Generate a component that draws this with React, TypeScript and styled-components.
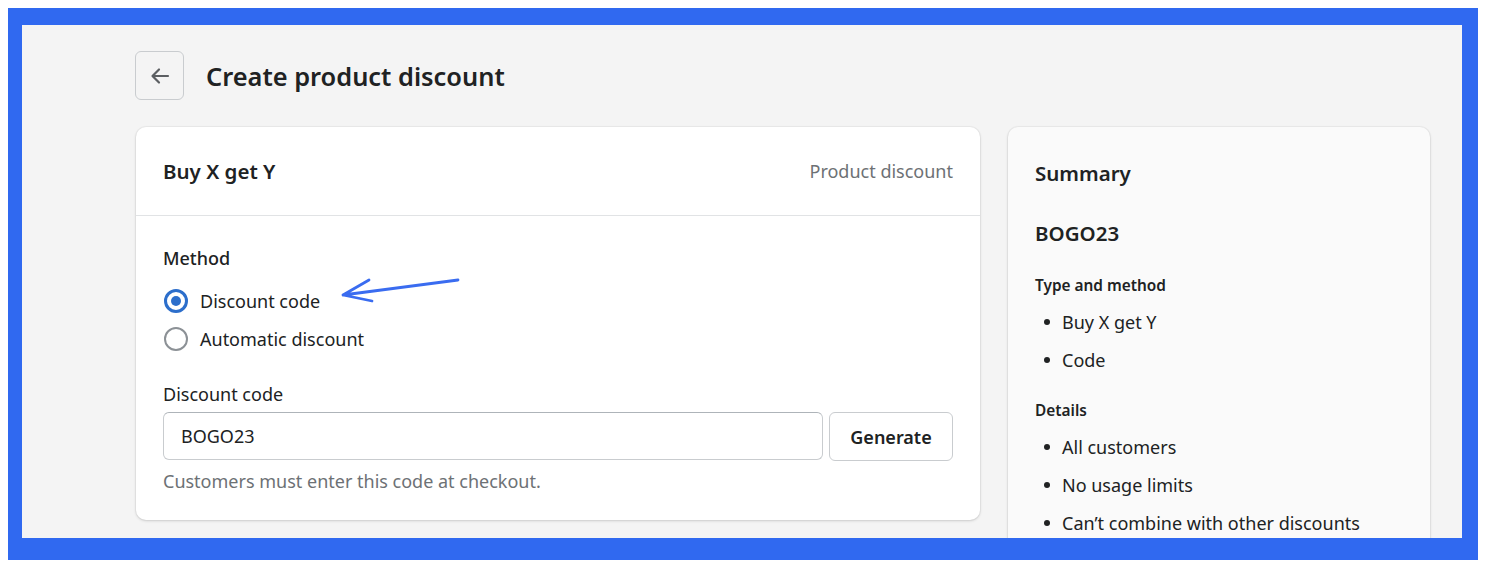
import React from 'react';
import styled, {createGlobalStyle} from 'styled-components';

const GlobalStyle = createGlobalStyle`
  html, body {
    margin: 0;
    padding: 0;
    background: #ffffff;
  }
  body {
    font-family: 'Noto Sans', 'Open Sans', 'Liberation Sans', sans-serif;
    color: #202223;
    -webkit-font-smoothing: antialiased;
  }
`;

const Frame = styled.div`
  margin: 8px 0 0 8px;
  width: 1470px;
  height: 552px;
  box-sizing: border-box;
  border-style: solid;
  border-color: #3069f0;
  border-width: 17px 16px 22px 14px;
  background: #f4f4f4;
  overflow: hidden;
`;

const Page = styled.div`
  padding: 26px 32px 0 113px;
  display: flex;
  flex-direction: column;
  gap: 27px;
`;

const Header = styled.header`
  display: flex;
  align-items: center;
  gap: 22px;
`;

const BackButton = styled.button`
  width: 49px;
  height: 49px;
  display: flex;
  align-items: center;
  justify-content: center;
  background: transparent;
  border: 1px solid #c9cccf;
  border-radius: 6px;
  padding: 0;
  color: #5c5f62;
`;

const Title = styled.h1`
  margin: 0;
  font-size: 25.4px;
  font-weight: 600;
  line-height: 32px;
  color: #202223;
`;

const Columns = styled.div`
  display: grid;
  grid-template-columns: 844px 422px;
  gap: 28px;
  align-items: start;
  padding-left: 1px;
`;

const Card = styled.section<{$muted?: boolean}>`
  background: ${(p) => (p.$muted ? '#fafafa' : '#ffffff')};
  border-radius: 10px;
  box-shadow: 0 0 0 1px rgba(0, 0, 0, 0.03), 0 1px 3px rgba(0, 0, 0, 0.15);
`;

const CardHeader = styled.div`
  display: flex;
  align-items: center;
  justify-content: space-between;
  height: 88px;
  padding: 0 27px;
  border-bottom: 1px solid #e1e3e5;
`;

const CardTitle = styled.h2`
  margin: 0;
  font-size: 20.5px;
  font-weight: 600;
  line-height: 28px;
`;

const Subdued = styled.span`
  font-size: 18px;
  color: #6d7175;
`;

const CardBody = styled.div`
  padding: 30px 27px 27px;
  display: flex;
  flex-direction: column;
`;

const Label = styled.div`
  font-size: 18px;
  line-height: 24px;
  font-weight: 500;
`;

const FieldLabel = styled(Label)`
  font-weight: 400;
  margin-top: 24px;
`;

const RadioGroup = styled.div`
  margin-top: 12px;
  display: flex;
  flex-direction: column;
  position: relative;
`;

const RadioRow = styled.label`
  display: flex;
  align-items: center;
  gap: 12px;
  height: 38px;
  font-size: 18px;
`;

const RadioCircle = styled.span<{$checked?: boolean}>`
  width: 24px;
  height: 24px;
  box-sizing: border-box;
  border-radius: 50%;
  border: ${(p) => (p.$checked ? '3px solid #2c6ecb' : '2.5px solid #8c9196')};
  display: flex;
  align-items: center;
  justify-content: center;
  margin-left: 1px;

  &::after {
    content: '';
    display: ${(p) => (p.$checked ? 'block' : 'none')};
    width: 10px;
    height: 10px;
    border-radius: 50%;
    background: #2c6ecb;
  }
`;

const Annotation = styled.svg`
  position: absolute;
  left: 177px;
  top: -6px;
  overflow: visible;
`;

const InputRow = styled.div`
  margin-top: 6px;
  display: flex;
  gap: 6px;
`;

const TextInput = styled.div`
  flex: 1;
  height: 48px;
  box-sizing: border-box;
  border: 1px solid #c9cccf;
  border-top-color: #aeb4b9;
  border-radius: 6px;
  display: flex;
  align-items: center;
  padding-left: 17px;
  font-size: 18px;
`;

const Button = styled.button`
  width: 124px;
  height: 49px;
  box-sizing: border-box;
  background: #ffffff;
  border: 1px solid #c9cccf;
  border-radius: 6px;
  font-family: inherit;
  font-size: 18px;
  font-weight: 600;
  color: #202223;
`;

const HelpText = styled.div`
  margin-top: 8px;
  font-size: 18px;
  line-height: 24px;
  color: #6d7175;
`;

const SummaryBody = styled.div`
  padding: 32px 27px 0;
  display: flex;
  flex-direction: column;
  height: 420px;
`;

const SummaryCode = styled(CardTitle)`
  margin-top: 32px;
`;

const SectionTitle = styled.h3<{$gap: number}>`
  margin: ${(p) => p.$gap}px 0 0;
  font-size: 15.4px;
  line-height: 22px;
  font-weight: 600;
`;

const List = styled.ul`
  margin: 6px 0 0;
  padding: 0;
  list-style: none;
`;

const ListItem = styled.li`
  display: flex;
  align-items: center;
  height: 38px;
  font-size: 18px;
  padding-left: 9px;

  &::before {
    content: '';
    width: 6px;
    height: 6px;
    border-radius: 50%;
    background: #202223;
    margin-right: 12px;
  }
`;

const ArrowLeftIcon = () => (
  <svg width="24" height="24" viewBox="0 0 24 24" fill="none">
    <path
      d="M20 12H5M11 5.5 4.5 12l6.5 6.5"
      stroke="currentColor"
      strokeWidth="2.2"
      strokeLinecap="round"
      strokeLinejoin="round"
    />
  </svg>
);

const METHODS = [
  {label: 'Discount code', checked: true},
  {label: 'Automatic discount', checked: false}
];

const TYPE_ITEMS = ['Buy X get Y', 'Code'];
const DETAIL_ITEMS = ['All customers', 'No usage limits', 'Can’t combine with other discounts'];

const App = () => {
  return (
    <>
      <GlobalStyle />
      <Frame>
        <Page>
          <Header>
            <BackButton aria-label="Back">
              <ArrowLeftIcon />
            </BackButton>
            <Title>Create product discount</Title>
          </Header>

          <Columns>
            <Card>
              <CardHeader>
                <CardTitle>Buy X get Y</CardTitle>
                <Subdued>Product discount</Subdued>
              </CardHeader>
              <CardBody>
                <Label>Method</Label>
                <RadioGroup>
                  {METHODS.map((m) => (
                    <RadioRow key={m.label}>
                      <RadioCircle $checked={m.checked} />
                      {m.label}
                    </RadioRow>
                  ))}
                  {/* hand-drawn pointer from the screenshot */}
                  <Annotation width="130" height="30">
                    <path
                      d="M3 19 L118 4 M3 19 L29 4 M3 19 L32 25"
                      stroke="#3a6cf0"
                      strokeWidth="2.8"
                      strokeLinecap="round"
                      fill="none"
                    />
                  </Annotation>
                </RadioGroup>
                <FieldLabel>Discount code</FieldLabel>
                <InputRow>
                  <TextInput>BOGO23</TextInput>
                  <Button>Generate</Button>
                </InputRow>
                <HelpText>Customers must enter this code at checkout.</HelpText>
              </CardBody>
            </Card>

            <Card $muted>
              <SummaryBody>
                <CardTitle>Summary</CardTitle>
                <SummaryCode>BOGO23</SummaryCode>
                <SectionTitle $gap={28}>Type and method</SectionTitle>
                <List>
                  {TYPE_ITEMS.map((t) => (
                    <ListItem key={t}>{t}</ListItem>
                  ))}
                </List>
                <SectionTitle $gap={21}>Details</SectionTitle>
                <List>
                  {DETAIL_ITEMS.map((t) => (
                    <ListItem key={t}>{t}</ListItem>
                  ))}
                </List>
              </SummaryBody>
            </Card>
          </Columns>
        </Page>
      </Frame>
    </>
  );
};

export default App;
